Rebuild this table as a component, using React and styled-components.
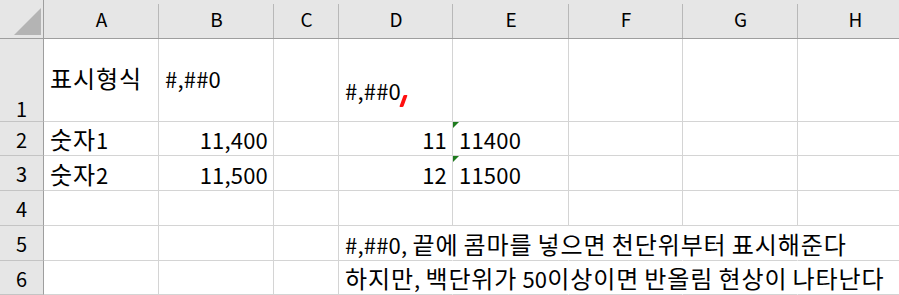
import styled, { createGlobalStyle } from "styled-components";

const GlobalStyle = createGlobalStyle`
  html, body {
    margin: 0;
    padding: 0;
    background: #ffffff;
  }
  body {
    font-family: "Noto Sans CJK KR", "Noto Sans", sans-serif;
    color: #000;
  }
`;

const COLS = ["A", "B", "C", "D", "E", "F", "G", "H"];
const WIDTHS = [115, 115, 65, 114, 116, 114, 115, 115];
const HEIGHTS = [83, 34, 35, 35, 35, 34];

// cell contents, keyed by "row-col"
const cells = {
  "1-A": { text: "표시형식", middle: true },
  "1-B": { text: "#,##0", middle: true },
  "1-D": { text: "#,##0", mark: true, lift: 18 },
  "2-A": { text: "숫자1" },
  "2-B": { text: "11,400", right: true },
  "2-D": { text: "11", right: true },
  "2-E": { text: "11400", flag: true },
  "3-A": { text: "숫자2" },
  "3-B": { text: "11,500", right: true },
  "3-D": { text: "12", right: true },
  "3-E": { text: "11500", flag: true },
  "5-D": { text: "#,##0, 끝에 콤마를 넣으면 천단위부터 표시해준다", spill: true },
  "6-D": { text: "하지만, 백단위가 50이상이면 반올림 현상이 나타난다", spill: true },
};

const Sheet = styled.div`
  display: grid;
  grid-template-columns: 44px ${WIDTHS.map((w) => w + "px").join(" ")};
  grid-template-rows: 39px ${HEIGHTS.map((h) => h + "px").join(" ")};
  width: 899px;
  height: 295px;
  overflow: hidden;
`;

const Corner = styled.div`
  position: relative;
  background: #e6e6e6;
  border-right: 1px solid #9e9e9e;
  border-bottom: 1px solid #9e9e9e;

  &::after {
    content: "";
    position: absolute;
    left: 14px;
    top: 8px;
    width: 27px;
    height: 27px;
    background: #b4b4b4;
    clip-path: polygon(100% 0, 100% 100%, 0 100%);
  }
`;

const ColHeadWrap = styled.div`
  background: #e6e6e6;
  border-bottom: 1px solid #9e9e9e;
  display: flex;
`;

const ColLabel = styled.div`
  width: 100%;
  height: 100%;
  display: flex;
  align-items: center;
  justify-content: center;
  font-size: 19px;
  padding-bottom: 1px;
  box-sizing: border-box;
  position: relative;

  &::after {
    content: "";
    position: absolute;
    right: 0;
    top: 4px;
    bottom: 0;
    width: 1px;
    background: #b8b8b8;
  }
`;

const RowHead = styled.div`
  display: flex;
  justify-content: center;
  align-items: ${(p) => (p.$tall ? "flex-end" : "center")};
  padding-bottom: ${(p) => (p.$tall ? "2px" : "0")};
  background: #e6e6e6;
  border-right: 1px solid #9e9e9e;
  border-bottom: 1px solid #c4c4c4;
  font-size: 20px;
  line-height: 1;
  box-sizing: border-box;
  padding-top: 2px;
`;

const Cell = styled.div`
  position: relative;
  display: flex;
  align-items: ${(p) => (p.$middle ? "center" : "flex-end")};
  justify-content: ${(p) => (p.$right ? "flex-end" : "flex-start")};
  padding: 0 5px ${(p) => (p.$lift ? p.$lift : 3)}px 6px;
  border-bottom: 1px solid #d4d4d4;
  border-right: 1px solid ${(p) => (p.$open ? "transparent" : "#d4d4d4")};
  font-size: 22px;
  line-height: 1.2;
  white-space: nowrap;
  overflow: visible;
  box-sizing: border-box;
  z-index: ${(p) => (p.$spill ? 1 : 0)};
`;

const Text = styled.span`
  position: relative;
  letter-spacing: 0.2px;
`;

// hangul is drawn a little larger and on a wider advance than latin
const Hangul = styled.span`
  font-size: 24px;
  letter-spacing: 0.9px;
  line-height: 1;
`;

// red comma scribbled after the format code
const Mark = styled.span`
  display: inline-block;
  width: 4px;
  height: 12px;
  margin-left: 3px;
  background: #ff1010;
  transform: skewX(-20deg) translateY(7px);
  border-radius: 1px;
`;

// green "number stored as text" corner marker
const Flag = styled.span`
  position: absolute;
  left: 0;
  top: 0;
  width: 6px;
  height: 6px;
  background: #1e7b1e;
  clip-path: polygon(0 0, 100% 0, 0 100%);
`;

function renderText(str) {
  return str.split(/([\uac00-\ud7a3]+)/).map((part, i) =>
    /[\uac00-\ud7a3]/.test(part) ? <Hangul key={i}>{part}</Hangul> : part
  );
}

export default function App() {
  // rows 5 and 6 spill text from D across to H, hiding the gridlines
  const spillRows = [5, 6];

  return (
    <>
      <GlobalStyle />
      <Sheet>
        <Corner />
        {COLS.map((c) => (
          <ColHeadWrap key={c}>
            <ColLabel>{c}</ColLabel>
          </ColHeadWrap>
        ))}
        {HEIGHTS.map((_, i) => {
          const row = i + 1;
          return [
            <RowHead key={"r" + row} $tall={row === 1}>
              {row}
            </RowHead>,
            ...COLS.map((c, ci) => {
              const data = cells[row + "-" + c] || {};
              const open =
                spillRows.includes(row) && ci >= 3 && ci < COLS.length - 1;
              return (
                <Cell
                  key={row + c}
                  $middle={data.middle}
                  $right={data.right}
                  $lift={data.lift}
                  $spill={data.spill}
                  $open={open}
                >
                  {data.flag && <Flag />}
                  {data.text && (
                    <Text>
                      {renderText(data.text)}
                      {data.mark && <Mark />}
                    </Text>
                  )}
                </Cell>
              );
            }),
          ];
        })}
      </Sheet>
    </>
  );
}
